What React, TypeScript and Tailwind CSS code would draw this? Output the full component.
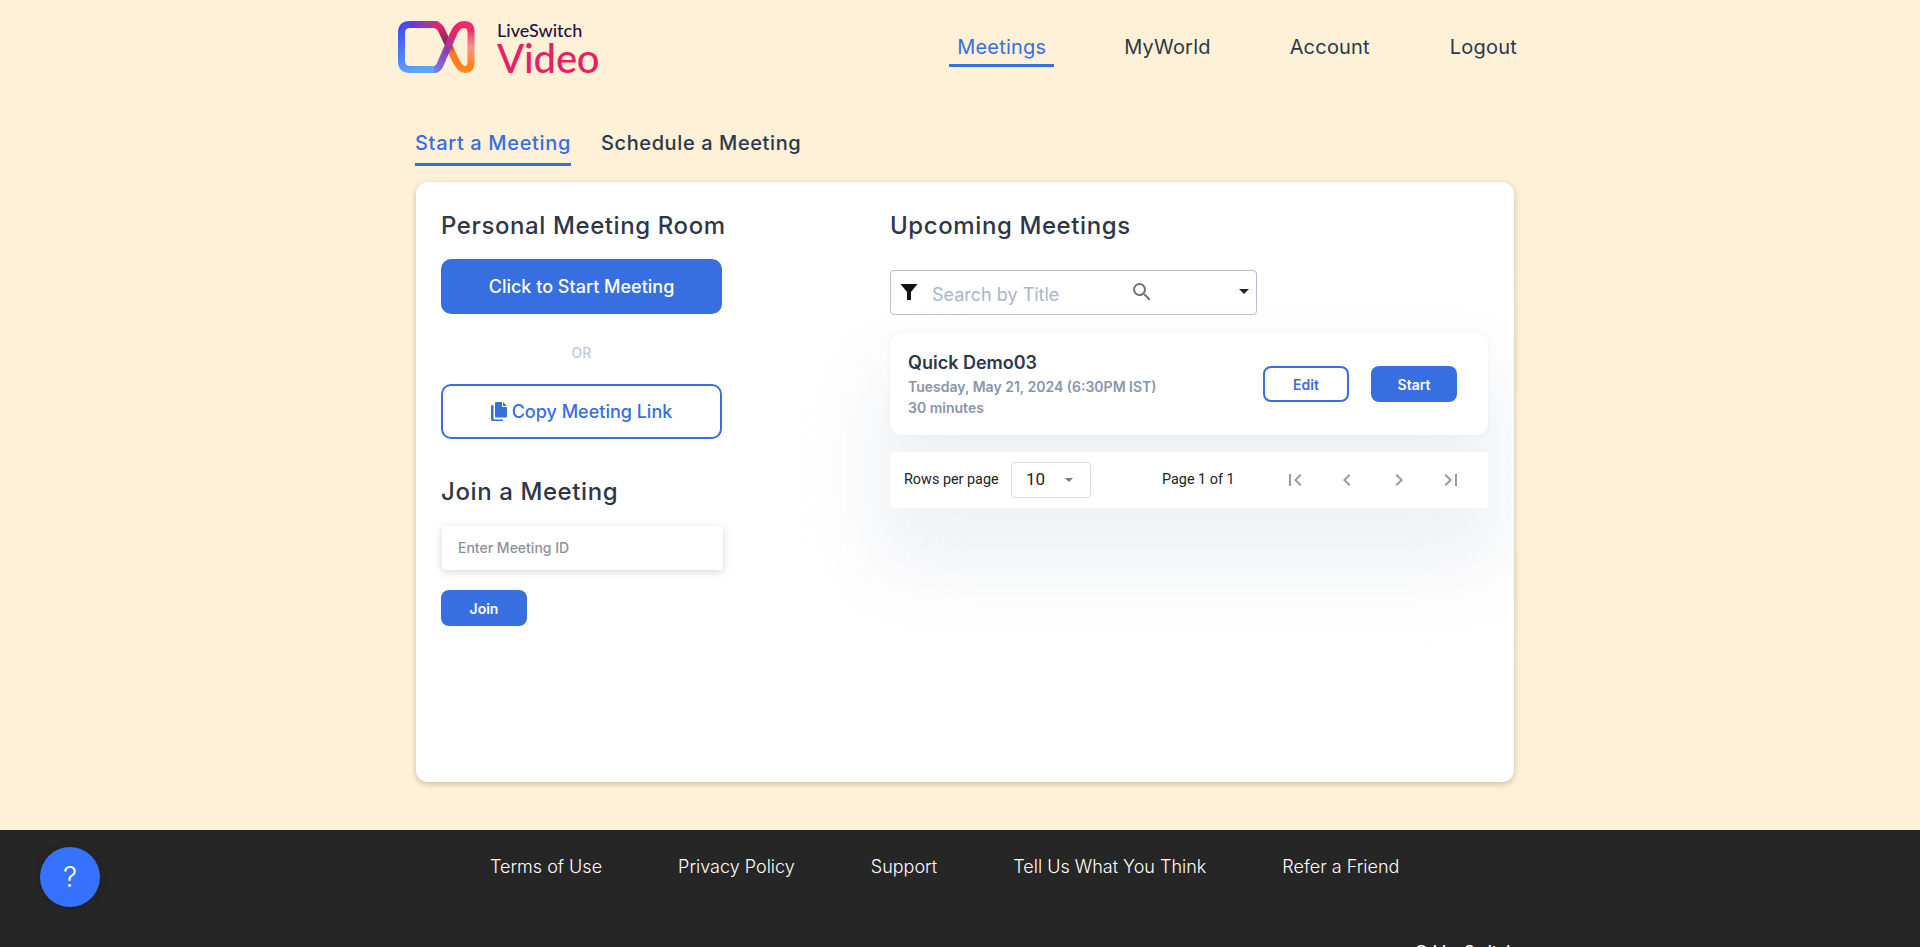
import React from "react";

function Logo() {
  return (
    <div className="flex items-start">
      <svg width="77" height="52" viewBox="0 0 77 52" className="block">
        <defs>
          <linearGradient id="a" gradientUnits="userSpaceOnUse" x1="6" y1="0" x2="44" y2="6">
            <stop offset="0" stopColor="#3b3df6" />
            <stop offset="0.55" stopColor="#9a3aa6" />
            <stop offset="1" stopColor="#ee1f6b" />
          </linearGradient>
          <linearGradient id="b" gradientUnits="userSpaceOnUse" x1="0" y1="4" x2="20" y2="50">
            <stop offset="0" stopColor="#4046f2" />
            <stop offset="1" stopColor="#5ea6fb" />
          </linearGradient>
          <linearGradient id="c" gradientUnits="userSpaceOnUse" x1="30" y1="50" x2="66" y2="4">
            <stop offset="0" stopColor="#6f8cf5" />
            <stop offset="0.45" stopColor="#8c3fb4" />
            <stop offset="0.8" stopColor="#ee1f6b" />
            <stop offset="1" stopColor="#ee2a6a" />
          </linearGradient>
          <linearGradient id="d" gradientUnits="userSpaceOnUse" x1="40" y1="4" x2="62" y2="50">
            <stop offset="0" stopColor="#ee1f6b" />
            <stop offset="0.4" stopColor="#7a2a5c" />
            <stop offset="0.62" stopColor="#ff7a1e" />
            <stop offset="1" stopColor="#ff851f" />
          </linearGradient>
          <linearGradient id="e" gradientUnits="userSpaceOnUse" x1="73" y1="8" x2="73" y2="44">
            <stop offset="0" stopColor="#ee2a6a" />
            <stop offset="0.5" stopColor="#f8938a" />
            <stop offset="1" stopColor="#ff851f" />
          </linearGradient>
        </defs>
        <path d="M36 3.500 Q40 3.500 43 8 L57 38 Q62 48.500 67 48.500 Q73 48.500 73 41" fill="none" stroke="url(#d)" strokeWidth="7" />
        <path d="M73 11 V41" fill="none" stroke="url(#e)" strokeWidth="7" />
        <path d="M40 3.500 H12" fill="none" stroke="url(#a)" strokeWidth="7" />
        <path d="M12 3.500 Q3.500 3.500 3.500 12 V40 Q3.500 48.500 12 48.500 H36" fill="none" stroke="url(#b)" strokeWidth="7" />
        <path d="M36 48.500 Q40 48.500 42 44 L55 14 Q59 3.500 66 3.500 Q73 3.500 73 11" fill="none" stroke="url(#c)" strokeWidth="7" />
      </svg>
      <div className="mt-[-1px] ml-[22px] flex flex-col font-['Lato',sans-serif]">
        <span className="text-[18px] leading-[20px] font-medium text-[#1d1146]">LiveSwitch</span>
        <span className="mt-[-2px] text-[40px] leading-[40px] font-medium tracking-[-0.2px] text-[#e91e63]">Video</span>
      </div>
    </div>
  );
}

const Tab = ({ children, active }: { children: React.ReactNode; active?: boolean }) => (
  <div
    className={
      active
        ? "h-[39px] border-b-[3px] border-[#376ee0] pt-[1px] text-[20px] leading-[30px] font-medium tracking-[0.033em] text-[#376ee0]"
        : "h-[39px] pt-[1px] text-[20px] leading-[30px] font-medium tracking-[0.03em] text-[#2d3748]"
    }
  >
    {children}
  </div>
);

function PageIcon({ d }: { d: string }) {
  return (
    <svg width="24" height="24" viewBox="0 0 24 24" fill="#9a9a9a" className="block">
      <path d={d} />
    </svg>
  );
}

export default function App() {
  return (
    <div className="relative h-[947px] overflow-hidden bg-[#fff1d7] font-['Inter',sans-serif]">
      <header className="mr-[403px] ml-[398px] flex h-[92px] items-start justify-between">
        <div className="mt-[21px]"><Logo /></div>
        <nav className="mt-[29px] flex items-start text-[20px] leading-[28px] tracking-[0.2px] text-[#2d3748]">
          <div className="mr-[70px] flex h-[38px] w-[105px] justify-center border-b-[3px] border-[#376ee0] pt-[4px] text-[#376ee0]">Meetings</div>
          <div className="mr-[79px] pt-[4px]">MyWorld</div>
          <div className="mr-[80px] pt-[4px]">Account</div>
          <div className="pt-[4px]">Logout</div>
        </nav>
      </header>

      <main className="mx-[416px] w-[1098px]">
        <div className="ml-[-1px] flex gap-[30px] pt-[35px]">
          <Tab active>Start a Meeting</Tab>
          <Tab>Schedule a Meeting</Tab>
        </div>
        <div className="mt-[16px] flex h-[600px] overflow-hidden rounded-[12px] bg-white pt-[29px] pl-[25px] shadow-[0_2px_6px_rgba(0,0,0,0.22)]">
          <section className="w-[449px]">
            <h2 className="text-[24px] leading-[30px] font-medium tracking-[0.025em] text-[#2d3748]">Personal Meeting Room</h2>
            <button className="mt-[18px] block h-[55px] w-[281px] rounded-[10px] bg-[#376ee0] text-[18px] font-medium text-white">Click to Start Meeting</button>
            <div className="mt-[29px] w-[281px] text-center text-[14px] leading-[20px] font-medium text-[#c4c9d4]">OR</div>
            <button className="mt-[21px] flex h-[55px] w-[281px] items-center justify-center gap-[5px] rounded-[10px] border-2 border-[#376ee0] bg-white text-[18px] font-medium text-[#376ee0]">
              <svg width="16" height="19" viewBox="0 0 16 19" fill="#376ee0" className="block">
                <path d="M5 0h6v5h5v9.500a1 1 0 0 1-1 1H5a1 1 0 0 1-1-1V1a1 1 0 0 1 1-1z" />
                <path d="M12 0l4 4h-4z" />
                <path d="M2.500 3v13.500a1 1 0 0 0 1 1H12V19H1.500a1.500 1.500 0 0 1-1.500-1.500V4.500A1.500 1.500 0 0 1 1.500 3z" />
              </svg>
              Copy Meeting Link
            </button>
            <h2 className="mt-[38px] text-[24px] leading-[30px] font-medium tracking-[0.025em] text-[#2d3748]">Join a Meeting</h2>
            <div className="mt-[19px] ml-[1px] flex h-[44px] w-[281px] items-center rounded-[3px] bg-white pb-[1px] pl-[16px] text-[14px] font-medium text-[#8d919c] shadow-[0_2px_8px_rgba(0,0,0,0.16)]">Enter Meeting ID</div>
            <button className="mt-[20px] block h-[36px] w-[86px] rounded-[8px] bg-[#376ee0] text-[14px] font-semibold text-white">Join</button>
          </section>

          <section className="w-[598px]">
            <h2 className="text-[24px] leading-[30px] font-medium tracking-[0.025em] text-[#2d3748]">Upcoming Meetings</h2>
            <div className="mt-[29px] flex h-[45px] w-[367px] items-center rounded-[4px] border border-[#b4bcd4] bg-white pl-[9px]">
              <svg width="18" height="18" viewBox="0 0 18 18" fill="#111" className="mt-[-1px] block">
                <path d="M0.500 1h17L11 9v8l-4 0V9z" />
              </svg>
              <span className="mt-[3px] ml-[14px] w-[198px] text-[18px] text-[#aab4cd]">Search by Title</span>
              <svg width="24" height="24" viewBox="0 0 24 24" fill="#707070" className="mt-[-1px] block">
                <path d="M15.500 14h-.79l-.28-.27A6.470 6.470 0 0 0 16 9.500 6.500 6.500 0 1 0 9.500 16c1.610 0 3.090-.59 4.230-1.570l.27.28v.79l5 4.990L20.490 19l-4.990-5zm-6 0C7.010 14 5 11.990 5 9.500S7.010 5 9.500 5 14 7.010 14 9.500 11.990 14 9.500 14z" />
              </svg>
              <div className="mt-[-2px] ml-[85px] h-0 w-0 border-x-[5px] border-t-[5px] border-x-transparent border-t-[#222]" />
            </div>

            <div className="relative mt-[18px] w-[598px]">
              <div className="absolute top-[36px] right-[-16px] left-[-16px] h-[200px] bg-[#f0f1f4] blur-[40px]" />
              <div className="relative flex h-[102px] items-center rounded-[12px] bg-white pr-[31px] pl-[18px] shadow-[0_0_6px_rgba(120,130,160,0.08)]">
                <div className="flex-1">
                  <div className="text-[18px] leading-[24px] font-semibold text-[#2d3748]">Quick Demo03</div>
                  <div className="mt-[1px] text-[14px] leading-[21px] font-semibold text-[#8a94ad]">Tuesday, May 21, 2024 (6:30PM IST)</div>
                  <div className="text-[14px] leading-[21px] font-semibold text-[#8a94ad]">30 minutes</div>
                </div>
                <button className="h-[36px] w-[86px] rounded-[8px] border-2 border-[#376ee0] bg-white text-[14px] font-semibold text-[#376ee0]">Edit</button>
                <button className="ml-[22px] h-[36px] w-[86px] rounded-[8px] bg-[#376ee0] text-[14px] font-semibold text-white">Start</button>
              </div>
              <div className="relative mt-[17px] flex h-[56px] items-center rounded-[4px] bg-white pl-[14px] font-['Roboto',sans-serif] text-[14.4px] text-[#222]">
                <span className="w-[107px]">Rows per page</span>
                <div className="flex h-[36px] w-[80px] items-center rounded-[4px] border border-[#dedede] pl-[14px] text-[17px]">
                  10
                  <div className="ml-[20px] h-0 w-0 border-x-[4.500px] border-t-[4.500px] border-x-transparent border-t-[#777]" />
                </div>
                <span className="ml-[71px] w-[73px]">Page 1 of 1</span>
                <div className="ml-[48px] flex items-center gap-[28px]">
                  <PageIcon d="M18.410 16.590 13.820 12l4.590-4.590L17 6l-6 6 6 6zM6 6h2v12H6z" />
                  <PageIcon d="M15.410 7.410 14 6l-6 6 6 6 1.410-1.410L10.830 12z" />
                  <PageIcon d="M10 6 8.590 7.410 13.170 12l-4.580 4.590L10 18l6-6z" />
                  <PageIcon d="M5.590 7.410 10.180 12l-4.590 4.590L7 18l6-6-6-6zM16 6h2v12h-2z" />
                </div>
              </div>
            </div>
          </section>
        </div>
      </main>

      <footer className="mt-[48px] flex h-[117px] flex-col bg-[#262626] text-white">
        <div className="flex gap-[76px] pt-[25px] pl-[490px] text-[18px] leading-[24px] font-light text-white">
          <span>Terms of Use</span>
          <span>Privacy Policy</span>
          <span>Support</span>
          <span>Tell Us What You Think</span>
          <span>Refer a Friend</span>
        </div>
        <div className="mt-[62px] mr-[404px] self-end text-[16px] leading-[20px] font-medium whitespace-nowrap text-white">© LiveSwitch</div>
      </footer>

      <button className="absolute top-[847px] left-[40px] flex h-[60px] w-[60px] items-center justify-center rounded-full bg-[#3572fd] text-[28px] leading-none font-light text-white shadow-[0_0_6px_rgba(0,0,0,0.2)]">?</button>
    </div>
  );
}
